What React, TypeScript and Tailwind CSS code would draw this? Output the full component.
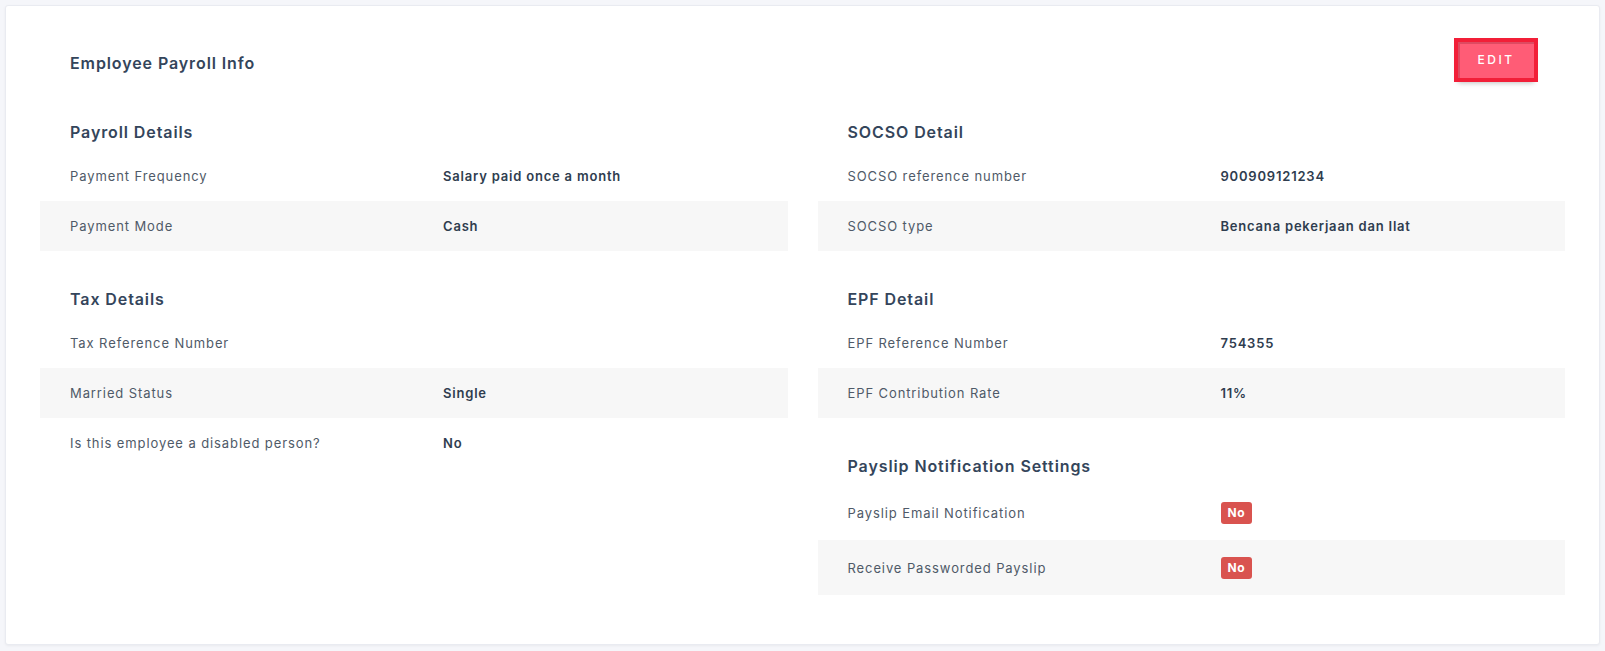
import React from 'react';

type Row = { label: string; value?: string; badge?: string };
type Section = { title: string; rows: Row[] };

const leftSections: Section[] = [
  {
    title: 'Payroll Details',
    rows: [
      { label: 'Payment Frequency', value: 'Salary paid once a month' },
      { label: 'Payment Mode', value: 'Cash' },
    ],
  },
  {
    title: 'Tax Details',
    rows: [
      { label: 'Tax Reference Number', value: '' },
      { label: 'Married Status', value: 'Single' },
      { label: 'Is this employee a disabled person?', value: 'No' },
    ],
  },
];

const rightSections: Section[] = [
  {
    title: 'SOCSO Detail',
    rows: [
      { label: 'SOCSO reference number', value: '900909121234' },
      { label: 'SOCSO type', value: 'Bencana pekerjaan dan Ilat' },
    ],
  },
  {
    title: 'EPF Detail',
    rows: [
      { label: 'EPF Reference Number', value: '754355' },
      { label: 'EPF Contribution Rate', value: '11%' },
    ],
  },
  {
    title: 'Payslip Notification Settings',
    rows: [
      { label: 'Payslip Email Notification', badge: 'No' },
      { label: 'Receive Passworded Payslip', badge: 'No' },
    ],
  },
];

function InfoSection({ section, first }: { section: Section; first: boolean }) {
  return (
    <div className={first ? '' : 'mt-[36px]'}>
      <h3 className="px-[30px] mb-[7px] text-[16px] leading-6 font-semibold text-[#34455b] tracking-[0.9px]">
        {section.title}
      </h3>
      <div>
        {section.rows.map((row, i) => (
          <div
            key={row.label}
            className={`flex items-center px-[30px] ${row.badge ? 'py-[16px] min-h-[55px]' : 'py-4'} ${
              i % 2 === 1 ? 'bg-[#f7f7f7]' : 'bg-white'
            }`}
          >
            <div className="w-[373px] shrink-0 text-[13px] leading-[18px] text-[#4f5a68] tracking-[0.9px]">
              {row.label}
            </div>
            {row.badge ? (
              <span className="inline-block rounded-[3px] bg-[#d9534f] px-[7px] py-[3px] text-[12px] leading-4 font-bold text-white tracking-[0.6px]">
                {row.badge}
              </span>
            ) : (
              <div className="text-[13px] leading-[18px] font-semibold text-[#2f3d4f] tracking-[0.8px]">
                {row.value}
              </div>
            )}
          </div>
        ))}
      </div>
    </div>
  );
}

export default function App() {
  return (
    <div className="min-h-screen bg-[#f5f6fa] p-[5px] font-['Inter',sans-serif]">
      <div className="bg-white border border-[#e9ebf1] rounded-[3px] shadow-[0_1px_3px_rgba(0,0,0,0.05)] px-[34px] pt-[36px] pb-[49px]">
        {/* Header */}
        <div className="flex items-start justify-between px-[30px]">
          <h2 className="mt-[9px] text-[16px] leading-6 font-semibold text-[#34455b] tracking-[0.9px]">
            Employee Payroll Info
          </h2>
          <button className="h-9 w-[76px] mr-[1px] bg-[#ff5c76] text-white text-[12px] font-medium tracking-[2.5px] ring-[4px] ring-[#f21f38] shadow-[inset_1px_1px_0_1px_rgba(160,40,60,0.35),0_5px_5px_rgba(0,0,0,0.25)]">
            EDIT
          </button>
        </div>

        <div className="grid grid-cols-2 gap-x-[30px] mt-[42px]">
          <div>
            {leftSections.map((s, i) => (
              <InfoSection key={s.title} section={s} first={i === 0} />
            ))}
          </div>
          <div>
            {rightSections.map((s, i) => (
              <InfoSection key={s.title} section={s} first={i === 0} />
            ))}
          </div>
        </div>
      </div>
    </div>
  );
}
